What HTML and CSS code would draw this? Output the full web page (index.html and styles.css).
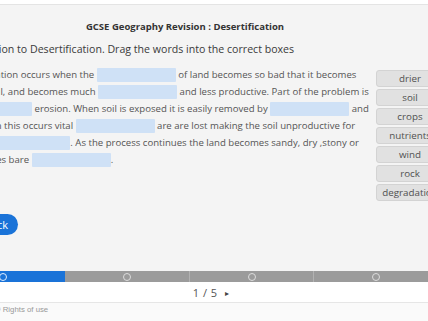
FILE: index.html
```html
<!DOCTYPE html>
<html lang="en">
<head>
    <meta charset="UTF-8">
    <meta name="viewport" content="width=device-width, initial-scale=1.0">
    <title>GCSE Geography Revision : Desertification</title>
    <link rel="stylesheet" href="styles.css">
</head>
<body>

    <div class="top-strip"></div>

    <div class="slide">
        <h1 class="title">GCSE Geography Revision : Desertification</h1>
        <p class="instructions">Introduction to Desertification. Drag the words into the correct boxes</p>

        <div class="task">
            <p class="text">
                Desertification occurs when the <span class="blank"></span> of land becomes so bad that it becomes<br>
                less fruitful, and becomes much <span class="blank"></span> and less productive. Part of the problem is<br>
                <span class="blank"></span> erosion. When soil is exposed it is easily removed by <span class="blank"></span> and<br>
                rain. When this occurs vital <span class="blank"></span> are are lost making the soil unproductive for<br>
                growing <span class="blank"></span>. As the process continues the land becomes sandy, dry ,stony or<br>
                all becomes bare <span class="blank"></span>.
            </p>
            <div class="words">
                <div class="word">drier</div>
                <div class="word">soil</div>
                <div class="word">crops</div>
                <div class="word">nutrients</div>
                <div class="word">wind</div>
                <div class="word">rock</div>
                <div class="word">degradation</div>
            </div>
        </div>

        <button type="button" class="check-button">Check</button>
    </div>

    <div class="progress">
        <div class="seg seg-done"><span class="dot"></span></div>
        <div class="seg"><span class="dot"></span></div>
        <div class="seg"><span class="dot"></span></div>
        <div class="seg"><span class="dot"></span></div>
    </div>

    <div class="nav">
        <span class="counter">1 / 5</span>
        <span class="next">&#9656;</span>
    </div>

    <div class="footer">
        <span class="rights-icon">&copy;</span> Rights of use
    </div>

</body>
</html>
```

FILE: styles.css
```css
body {
    font-family: "Open Sans", sans-serif;
    margin: 0;
    width: 428px;
    height: 321px;
    overflow: hidden;
    background-color: #fff;
}
.top-strip {
    height: 4px;
    background-color: #fff;
    border-bottom: 1px solid #e4e4e4;
}
.slide {
    height: 266px;
    background-color: #f4f4f4;
    overflow: hidden;
}
.title {
    width: 370px;
    margin: 0;
    padding-top: 15px;
    font-size: 9.5px;
    line-height: 14px;
    font-weight: bold;
    text-align: center;
    color: #333;
}
.instructions {
    margin: 7px 0 0 -47px;
    font-size: 10.6px;
    line-height: 16px;
    color: #3a3a3a;
    white-space: nowrap;
}
.task {
    display: flex;
    gap: 4px;
    margin: 9px 0 0 -47px;
}
.text {
    width: 419px;
    flex-shrink: 0;
    margin: 0;
    font-size: 9.6px;
    line-height: 17px;
    color: #555;
    white-space: nowrap;
}
.blank {
    display: inline-block;
    width: 79px;
    height: 14px;
    vertical-align: middle;
    background-color: #cfe1f6;
    border-radius: 1px;
}
.words {
    width: 68px;
    flex-shrink: 0;
    margin-top: 4px;
}
.word {
    height: 15px;
    margin-bottom: 2px;
    border: 1px solid #d3d3d3;
    border-radius: 3px;
    background-color: #e1e1e1;
    font-size: 9.8px;
    line-height: 15px;
    text-align: center;
    color: #505050;
}
.check-button {
    display: block;
    margin: 11px 0 0 -47px;
    width: 65px;
    height: 21px;
    padding: 0 10px 0 0;
    border: none;
    border-radius: 11px;
    background-color: #1a73d8;
    color: #fff;
    font-family: "Open Sans", sans-serif;
    font-size: 11px;
    text-align: right;
}
.progress {
    display: flex;
    height: 11px;
    margin-left: -59px;
    background-color: #9b9b9b;
}
.seg {
    width: 124px;
    flex-shrink: 0;
    display: flex;
    align-items: center;
    justify-content: center;
    border-left: 1px solid #b2b2b2;
    box-sizing: border-box;
}
.seg-done {
    background-color: #1a73d8;
    border-left: none;
}
.seg-done + .seg {
    border-left: none;
}
.dot {
    width: 8px;
    height: 8px;
    box-sizing: border-box;
    border: 1px solid #dcdcdc;
    border-radius: 50%;
}
.seg-done .dot {
    border: 1.5px solid #e0eeff;
}
.nav {
    height: 20px;
    display: flex;
    align-items: center;
    justify-content: center;
    gap: 8px;
    padding-right: 6px;
    background-color: #fff;
    font-size: 11px;
    word-spacing: 1px;
    color: #555;
}
.next {
    font-size: 8px;
    color: #444;
}
.footer {
    height: 18px;
    margin-left: -5px;
    border-top: 1px solid #e6e6e6;
    background-color: #fafafa;
    font-family: "Liberation Sans", Arial, sans-serif;
    font-size: 7.8px;
    line-height: 14px;
    color: #999;
}
.rights-icon {
    font-size: 7.5px;
}
```
